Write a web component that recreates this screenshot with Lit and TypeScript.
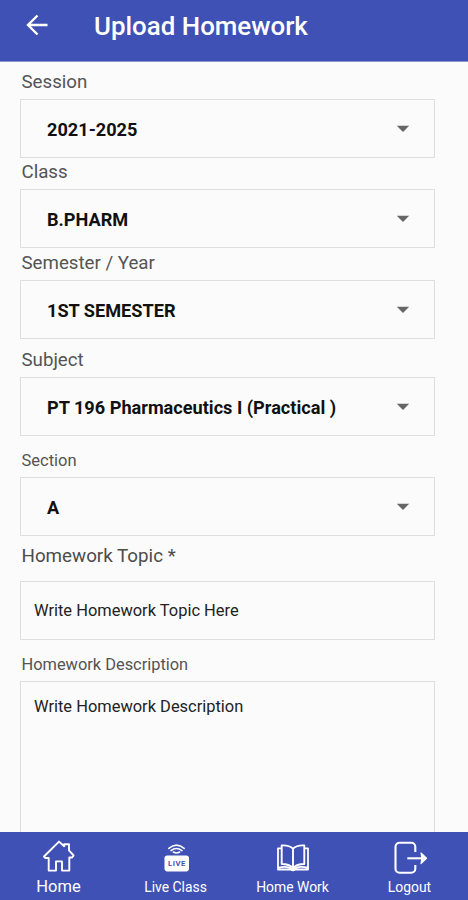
import { LitElement, html, css, svg } from "lit";
import { customElement, property } from "lit/decorators.js";
import { classMap } from "lit/directives/class-map.js";

@customElement("select-field")
class SelectField extends LitElement {
  @property() label = "";
  @property() value = "";
  @property({ type: Boolean, reflect: true }) small = false;

  static styles = css`
    :host { display: block; }
    .label { box-sizing: border-box; font-size: 18.7px; line-height: 20px; height: 27px; padding-left: 1.5px; color: #545454; white-space: pre; }
    :host([small]) .label { font-size: 16.5px; line-height: 22px; }
    .box {
      box-sizing: border-box; height: 59px; border: 1px solid #dedede;
      display: flex; align-items: center; justify-content: space-between;
      padding: 2px 24px 0 26px; font-size: 18.15px; font-weight: 700; color: #111; white-space: pre;
    }
    .caret { display: block; width: 14px; height: 8px; margin-bottom: 1px; }
  `;

  render() {
    return html`
      <div class="label">${this.label}</div>
      <div class="box">
        <span>${this.value}</span>
        <svg class="caret" viewBox="0 0 14 8"><path d="M.8.8h12.4L7 7z" fill="#666" /></svg>
      </div>
    `;
  }
}

const icons = {
  home: svg`<path d="M3 17.5 18 2.600l5.200 4.600V5.200H28v6.200l4.600 5.100-1.500 2H28.300V31.600H21v-9.200h-6V31.600H7.700V19H4.400z" fill="none" stroke="#fff" stroke-width="1.900" stroke-linejoin="round" />`,
  live: svg`
    <path d="M10.800 9.400q7.700-6.600 15.400 0M13 11.600q5.500-4.400 11 0M15.300 13q3.200 1.800 6.400 0" fill="none" stroke="#fff" stroke-width="1.500" stroke-linecap="round" />
    <rect x="6.500" y="16.400" width="24.500" height="16" rx="2.800" fill="#fff" />
    <text x="19" y="27.200" text-anchor="middle" class="live">LIVE</text>`,
  book: svg`
    <path d="M18 9.700C15 6.600 10.500 6.200 6.700 6.400V25C11 25 15 25.800 18 29 21 25.800 25 25 29.300 25V6.400C25.500 6.200 21 6.600 18 9.700V29" fill="none" stroke="#fff" stroke-width="1.900" stroke-linejoin="round" />
    <path d="M6.500 9.300H3V30.500H15.500q2.500 1.500 5 0H33V9.300H29.500M3.500 28.700Q12 26.700 18 30 24 26.700 32.500 28.700" fill="none" stroke="#fff" stroke-width="1.800" stroke-linejoin="round" />`,
  logout: svg`
    <path d="M23.300 13V7.700a4 4 0 0 0-4-4H7.500a4 4 0 0 0-4 4V29.700a4 4 0 0 0 4 4H19.300a4 4 0 0 0 4-4V26" fill="none" stroke="#fff" stroke-width="2.100" />
    <path d="M15.300 19.300H31" stroke="#fff" stroke-width="2.100" />
    <path d="M29 14 34.500 19.300 29 24.600 30 19.300z" fill="#fff" stroke="#fff" stroke-width="1.200" stroke-linejoin="round" />`,
};

const tabs = [
  { label: "Home", icon: icons.home, active: true },
  { label: "Live Class", icon: icons.live, active: false },
  { label: "Home Work", icon: icons.book, active: false },
  { label: "Logout", icon: icons.logout, active: false },
];

@customElement("app-root")
class AppRoot extends LitElement {
  static styles = css`
    :host {
      display: flex; flex-direction: column; height: 900px; overflow: hidden;
      background: #fbfbfb; font-family: Roboto, "Liberation Sans", sans-serif;
    }
    .bar {
      box-sizing: border-box; flex: none; height: 62px; display: flex; align-items: center;
      padding: 0 0 11px 25px; background: #3f51b5; border-bottom: 1px solid #8b95d0; color: #fff;
    }
    .back { width: 24px; height: 24px; margin-right: 45px; }
    .title { font-size: 25.9px; font-weight: 500; line-height: 30px; margin-top: 2px; }
    .form { flex: 1; min-height: 0; overflow: hidden; padding: 10px 33px 0 20px; display: flex; flex-direction: column; }
    .form > * { flex: none; }
    .session { height: 90px; }
    .klass { height: 91px; }
    .semester { height: 97px; }
    .subject { height: 100px; }
    .section { height: 96px; }
    .label { font-size: 18.8px; line-height: 20px; height: 35px; padding-left: 1.5px; color: #4c4c4c; }
    .label.small { font-size: 16.4px; line-height: 23px; height: 28px; color: #545454; }
    .box { box-sizing: border-box; border: 1px solid #dedede; padding-left: 13px; font-size: 16.45px; color: #222; }
    .topic { height: 59px; line-height: 58px; margin-bottom: 13px; }
    .desc { height: 170px; line-height: 20px; padding-top: 15px; }
    .nav { flex: none; height: 68px; display: grid; grid-template-columns: repeat(4, 1fr); background: #3f51b5; color: #fff; }
    .tab { display: flex; flex-direction: column; align-items: center; padding-top: 7px; font-size: 13.9px; line-height: 20px; }
    .tab.active { font-size: 16.5px; }
    .icon { width: 36px; height: 36px; margin-bottom: 2px; flex: none; }
    .live { font: 700 7.6px Roboto, sans-serif; letter-spacing: 0.6px; fill: #3f51b5; }
  `;

  render() {
    return html`
      <header class="bar">
        <svg class="back" viewBox="0 0 24 24"><path d="M22.500 12H3M12.500 2.500 3 12l9.500 9.500" fill="none" stroke="#fff" stroke-width="2.400" /></svg>
        <span class="title">Upload Homework</span>
      </header>
      <main class="form">
        <select-field class="session" label="Session" value="2021-2025"></select-field>
        <select-field class="klass" label="Class" value="B.PHARM"></select-field>
        <select-field class="semester" label="Semester / Year" value="1ST SEMESTER"></select-field>
        <select-field class="subject" label="Subject" value="PT 196 Pharmaceutics I (Practical )"></select-field>
        <select-field class="section" small label="Section" value="A"></select-field>
        <div class="label">Homework Topic *</div>
        <div class="box topic">Write Homework Topic Here</div>
        <div class="label small">Homework Description</div>
        <div class="box desc">Write Homework Description</div>
      </main>
      <nav class="nav">
        ${tabs.map((t) => html`
          <div class=${classMap({ tab: true, active: t.active })}>
            <svg class="icon" viewBox="0 0 36 36">${t.icon}</svg>
            <span>${t.label}</span>
          </div>`)}
      </nav>
    `;
  }
}
